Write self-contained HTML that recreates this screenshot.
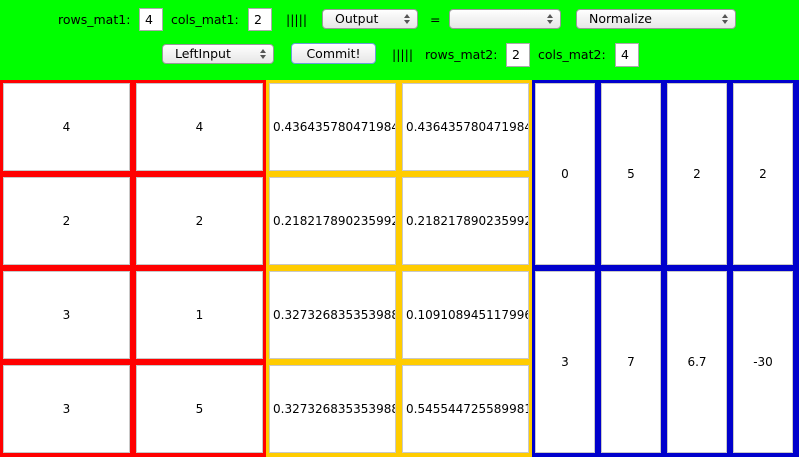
<!DOCTYPE html>
<html><head><style>
body{margin:0;width:799px;height:457px;overflow:hidden;background:#0f0;font-family:"DejaVu Sans","Liberation Sans",sans-serif;font-size:12px;position:relative}
.a{position:absolute}
.t{position:absolute;color:#000;font-size:12.5px;line-height:20px}
.in{position:absolute;background:#fff;border:1px solid #aaa;box-sizing:border-box;font-size:12.5px;line-height:21px;padding-left:5px}
.sel{position:absolute;box-sizing:border-box;border:1px solid #999;border-radius:4px;background:linear-gradient(#fff,#e6e6e6);font-size:12.5px;line-height:18px;padding-left:12px}
.sel:after{content:"";position:absolute;right:7px;top:4px;width:0;height:0;border-left:3px solid transparent;border-right:3px solid transparent;border-bottom:4px solid #555}
.sel:before{content:"";position:absolute;right:7px;top:10px;width:0;height:0;border-left:3px solid transparent;border-right:3px solid transparent;border-top:4px solid #555}
.c{position:absolute;background:#fff;border:1px solid #c8c8c8;box-sizing:border-box;display:flex;align-items:center;justify-content:center;font-size:12px;overflow:hidden;white-space:nowrap}
.l{justify-content:flex-start;padding-left:3px}
</style></head><body>
<span class="t" style="left:58px;top:10px">rows_mat1:</span>
<div class="in" style="left:139px;top:8px;width:24px;height:23px">4</div>
<span class="t" style="left:171px;top:10px">cols_mat1:</span>
<div class="in" style="left:248px;top:8px;width:24px;height:23px">2</div>
<span class="t" style="left:286px;top:10px">|||||</span>
<div class="sel" style="left:322px;top:9px;width:96px;height:20px">Output</div>
<span class="t" style="left:430px;top:10px">=</span>
<div class="sel" style="left:449px;top:9px;width:112px;height:20px"></div>
<div class="sel" style="left:576px;top:9px;width:160px;height:20px">Normalize</div>
<div class="sel" style="left:162px;top:44px;width:112px;height:20px">LeftInput</div>
<div class="a" style="left:291px;top:43px;width:85px;height:21px;box-sizing:border-box;border:1px solid #6a9ed8;border-radius:4px;background:linear-gradient(#fff,#e6e6e6);text-align:center;line-height:19px;font-size:12.5px">Commit!</div>
<span class="t" style="left:392px;top:45px">|||||</span>
<span class="t" style="left:425px;top:45px">rows_mat2:</span>
<div class="in" style="left:506px;top:43px;width:24px;height:24px">2</div>
<span class="t" style="left:538px;top:45px">cols_mat2:</span>
<div class="in" style="left:615px;top:43px;width:24px;height:24px">4</div>

<div class="a" style="left:0;top:80px;width:266px;height:377px;background:#f00"></div>
<div class="a" style="left:266px;top:80px;width:266px;height:377px;background:#fc0"></div>
<div class="a" style="left:532px;top:80px;width:267px;height:377px;background:#00c"></div>

<div class="c" style="left:3px;top:83px;width:127px;height:88px">4</div>
<div class="c" style="left:136px;top:83px;width:127px;height:88px">4</div>
<div class="c" style="left:3px;top:177px;width:127px;height:88px">2</div>
<div class="c" style="left:136px;top:177px;width:127px;height:88px">2</div>
<div class="c" style="left:3px;top:271px;width:127px;height:88px">3</div>
<div class="c" style="left:136px;top:271px;width:127px;height:88px">1</div>
<div class="c" style="left:3px;top:365px;width:127px;height:88px">3</div>
<div class="c" style="left:136px;top:365px;width:127px;height:88px">5</div>

<div class="c l" style="left:269px;top:83px;width:127px;height:88px">0.4364357804719848</div>
<div class="c l" style="left:402px;top:83px;width:127px;height:88px">0.4364357804719848</div>
<div class="c l" style="left:269px;top:177px;width:127px;height:88px">0.2182178902359924</div>
<div class="c l" style="left:402px;top:177px;width:127px;height:88px">0.2182178902359924</div>
<div class="c l" style="left:269px;top:271px;width:127px;height:88px">0.3273268353539886</div>
<div class="c l" style="left:402px;top:271px;width:127px;height:88px">0.1091089451179962</div>
<div class="c l" style="left:269px;top:365px;width:127px;height:88px">0.3273268353539886</div>
<div class="c l" style="left:402px;top:365px;width:127px;height:88px">0.5455447255899810</div>

<div class="c" style="left:535px;top:83px;width:60px;height:182px">0</div>
<div class="c" style="left:601px;top:83px;width:60px;height:182px">5</div>
<div class="c" style="left:667px;top:83px;width:60px;height:182px">2</div>
<div class="c" style="left:733px;top:83px;width:60px;height:182px">2</div>
<div class="c" style="left:535px;top:271px;width:60px;height:182px">3</div>
<div class="c" style="left:601px;top:271px;width:60px;height:182px">7</div>
<div class="c" style="left:667px;top:271px;width:60px;height:182px">6.7</div>
<div class="c" style="left:733px;top:271px;width:60px;height:182px">-30</div>
</body></html>
